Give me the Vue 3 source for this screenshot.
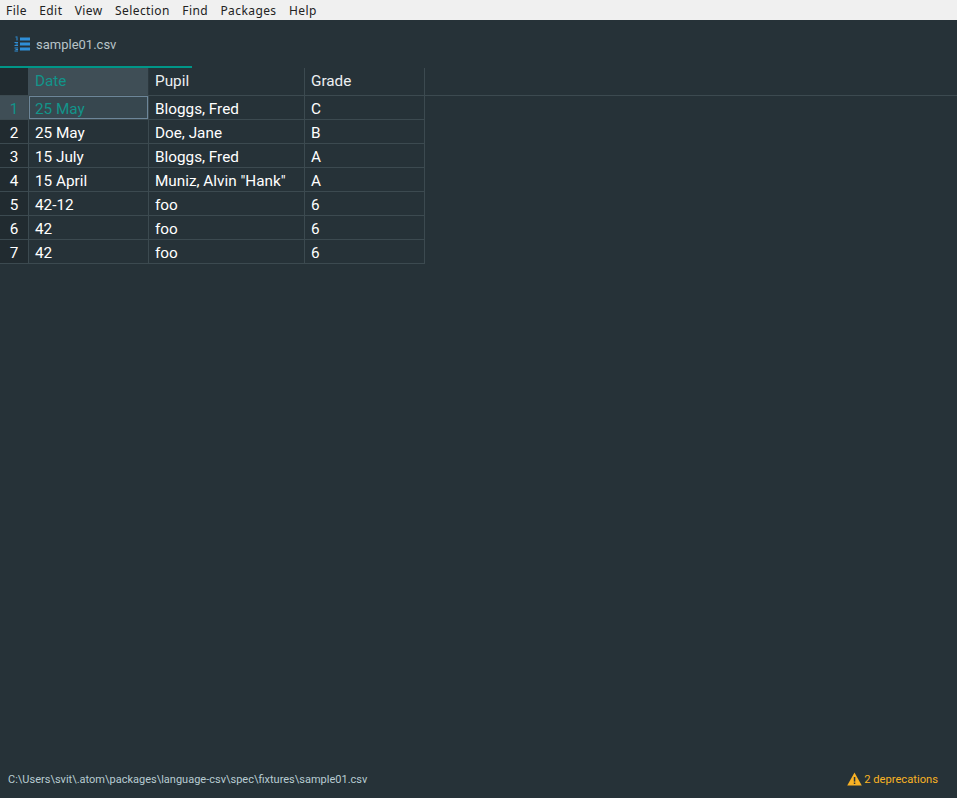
<script setup>
const columns = ['Date', 'Pupil', 'Grade']
const rows = [
  ['25 May', 'Bloggs, Fred', 'C'],
  ['25 May', 'Doe, Jane', 'B'],
  ['15 July', 'Bloggs, Fred', 'A'],
  ['15 April', 'Muniz, Alvin "Hank"', 'A'],
  ['42-12', 'foo', '6'],
  ['42', 'foo', '6'],
  ['42', 'foo', '6'],
]
const menus = ['File', 'Edit', 'View', 'Selection', 'Find', 'Packages', 'Help']
</script>

<template>
  <div class="app">
    <nav class="menubar">
      <span v-for="m in menus" :key="m" class="menu">{{ m }}</span>
    </nav>
    <div class="tabbar">
      <div class="tab">
        <svg class="tab-icon" width="16" height="16" viewBox="0 0 16 16">
          <g fill="#2f8fd8">
            <rect x="6" y="1.5" width="10" height="3" />
            <rect x="6" y="6.5" width="10" height="3" />
            <rect x="6" y="11.5" width="10" height="3" />
            <rect x="1.5" y="0.5" width="2" height="1" />
            <rect x="2.5" y="1.5" width="1" height="3" />
            <rect x="0.5" y="6" width="3.5" height="1" />
            <rect x="1.5" y="7.5" width="2.5" height="1" />
            <rect x="0.5" y="9" width="3.5" height="1" />
            <rect x="0.5" y="11.5" width="3.5" height="1" />
            <rect x="1.5" y="13" width="2.5" height="1" />
            <rect x="0.5" y="14.5" width="3.5" height="1" />
          </g>
        </svg>
        <span class="tab-title">sample01.csv</span>
      </div>
    </div>
    <main class="editor">
      <div class="head-row">
        <div class="gutter-head"></div>
        <div
          v-for="(c, i) in columns"
          :key="c"
          class="head-cell"
          :class="['c' + i, { active: i === 0 }]"
        >{{ c }}</div>
      </div>
      <div v-for="(r, ri) in rows" :key="ri" class="row">
        <div class="gutter" :class="{ active: ri === 0 }">{{ ri + 1 }}</div>
        <div
          v-for="(v, ci) in r"
          :key="ci"
          class="cell"
          :class="['c' + ci, { active: ri === 0 && ci === 0 }]"
        >{{ v }}</div>
      </div>
    </main>
    <footer class="statusbar">
      <span class="path">C:\Users\svit\.atom\packages\language-csv\spec\fixtures\sample01.csv</span>
      <span class="deprecations">
        <svg width="15" height="14" viewBox="0 0 15 14">
          <path d="M7.5 0.5 L14.8 13.5 L0.2 13.5 Z" fill="#f9b224" />
          <rect x="6.8" y="5" width="1.5" height="4.6" fill="#2a343a" />
          <rect x="6.8" y="10.5" width="1.5" height="1.5" fill="#2a343a" />
        </svg>
        <span>2 deprecations</span>
      </span>
    </footer>
  </div>
</template>

<style>
html, body { margin: 0; background: #263238; }
</style>

<style scoped>
.app {
  width: 957px;
  height: 798px;
  display: flex;
  flex-direction: column;
  background: #263238;
  font-family: Roboto, "Liberation Sans", sans-serif;
  overflow: hidden;
}
.menubar {
  height: 20px;
  flex: none;
  background: #f0f0f0;
  display: flex;
  align-items: center;
  gap: 12.35px;
  padding-left: 6px;
  font-size: 12px;
  letter-spacing: 0.42px;
  color: #222;
  font-family: "Noto Sans", "Open Sans", sans-serif;
}
.tabbar { height: 48px; flex: none; }
.tab {
  width: 192px;
  height: 48px;
  box-sizing: border-box;
  border-bottom: 2px solid #009688;
  display: flex;
  align-items: center;
  padding: 2px 0 0 14px;
  gap: 6px;
}
.tab-icon { flex: none; }
.tab-title { font-size: 13px; color: #b8c4c8; }
.editor { flex: 1; font-size: 15.3px; color: #fff; }
.head-row {
  height: 28px;
  box-sizing: border-box;
  display: flex;
  border-bottom: 1px solid #3c4a50;
}
.gutter-head { width: 28px; background: #212b30; flex: none; }
.head-cell {
  box-sizing: border-box;
  border-right: 1px solid #3c4a50;
  padding-left: 6px;
  line-height: 27px;
  color: #eceff1;
}
.head-cell.active { background: #3f4e56; color: #12948a; padding-left: 7px; border-right-color: #2c383e; }
.row { height: 24px; box-sizing: border-box; display: flex; width: 425px; border-bottom: 1px solid #3c4a50; }
.gutter {
  width: 29px;
  flex: none;
  box-sizing: border-box;
  text-align: center;
  line-height: 27px;
  background: #212b30;
  border-right: 1px solid #3c4a50;
}
.gutter.active { background: #3f4e56; color: #12948a; }
.cell {
  box-sizing: border-box;
  border-right: 1px solid #3c4a50;
  padding-left: 6px;
  line-height: 27px;
  white-space: nowrap;
}
.cell.active {
  background: #37474f;
  color: #12948a;
  outline: 1px solid #6d8699;
  outline-offset: -1px;
  border-right: 0;
  width: 119px;
  margin-right: 1px;
  box-shadow: 1px 0 0 #3c4a50;
}
.c0 { width: 120px; flex: none; }
.c1 { width: 156px; flex: none; }
.c2 { width: 120px; flex: none; }
.head-cell.c0 { width: 121px; }
.statusbar {
  height: 38px;
  flex: none;
  display: flex;
  align-items: center;
  justify-content: space-between;
  padding: 0 19px 0 8px;
  font-size: 11px;
  color: #b8ccd2;
}
.deprecations {
  display: flex;
  align-items: center;
  gap: 2px;
  color: #f9b224;
  font-size: 11.2px;
}
</style>
